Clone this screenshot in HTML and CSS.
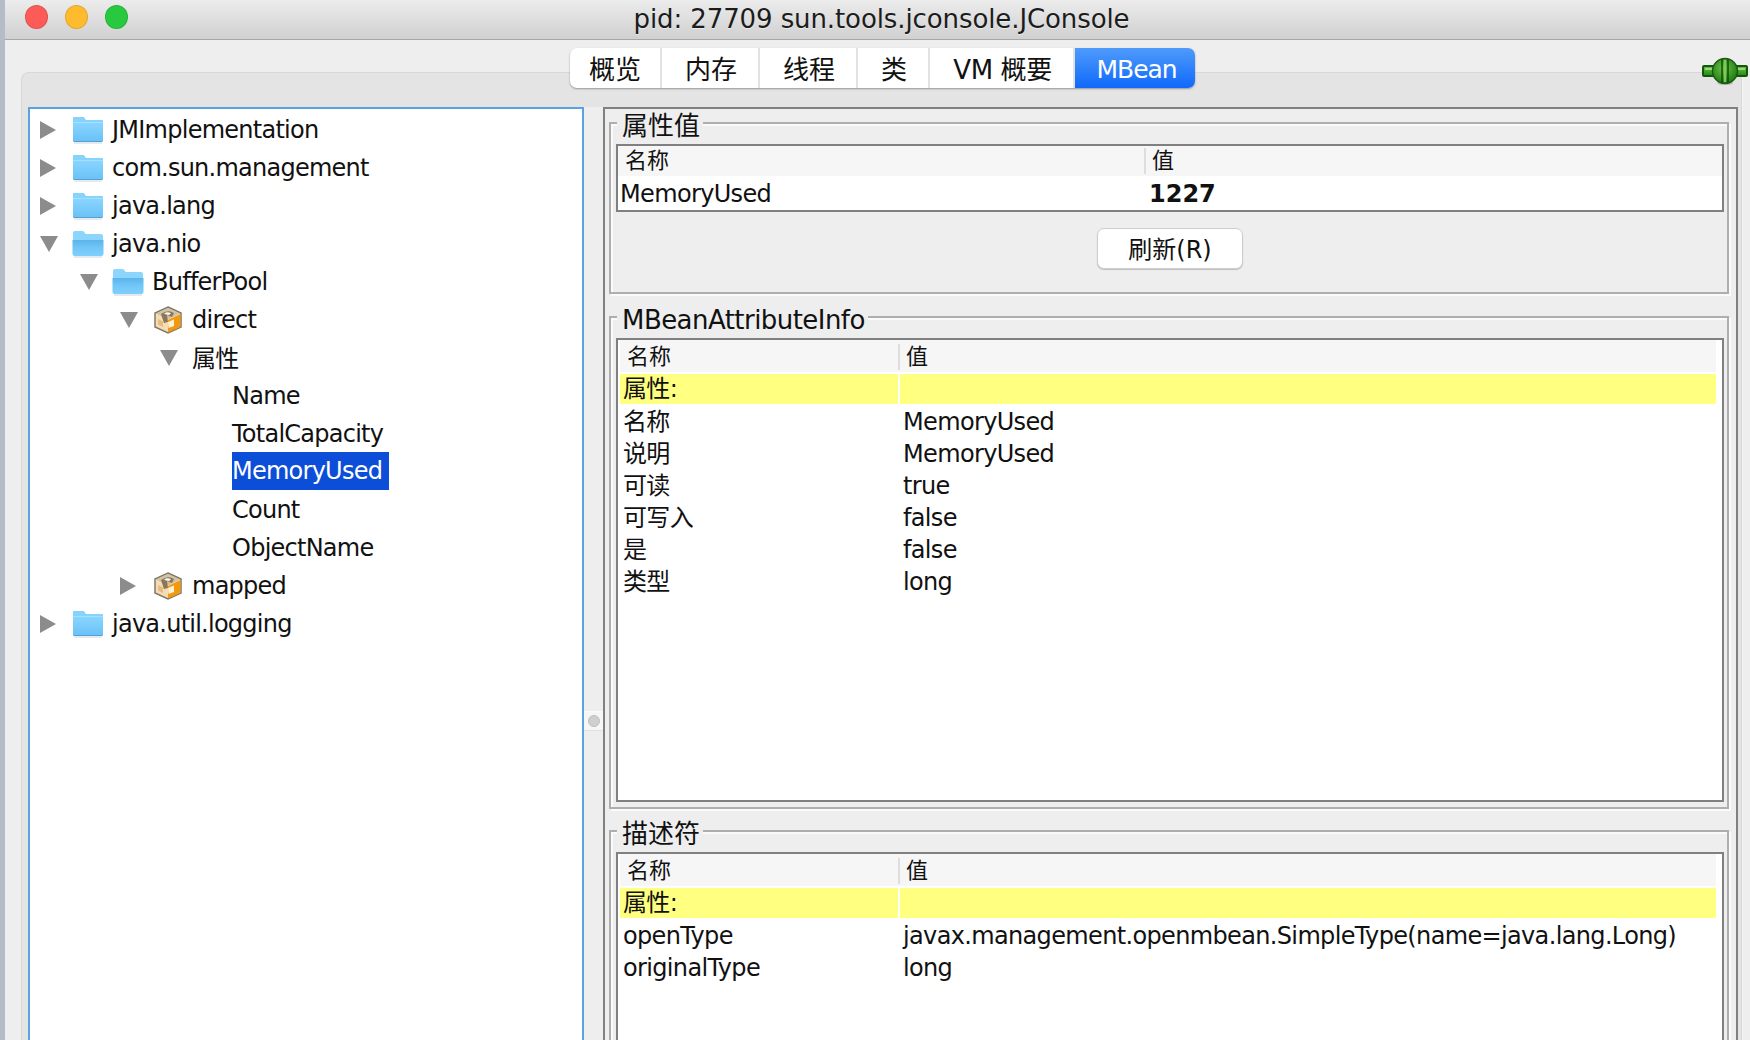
FILE: index.html
```html
<!DOCTYPE html>
<html lang="zh">
<head>
<meta charset="utf-8">
<title>pid: 27709 sun.tools.jconsole.JConsole</title>
<link rel="stylesheet" href="styles.css">
</head>
<body>
<svg class="defs" width="0" height="0" aria-hidden="true">
  <defs>
    <linearGradient id="fg" x1="0" y1="0" x2="0" y2="1">
      <stop offset="0" stop-color="#8ad6ff"/><stop offset="1" stop-color="#6ac2f8"/>
    </linearGradient>
    <linearGradient id="fo" x1="0" y1="0" x2="0" y2="1">
      <stop offset="0" stop-color="#5cb4ea"/><stop offset=".5" stop-color="#72c6f8"/><stop offset="1" stop-color="#7fd0fc"/>
    </linearGradient>
    <linearGradient id="gb" x1="0" y1="0" x2="0" y2="1">
      <stop offset="0" stop-color="#6cc04a"/><stop offset="1" stop-color="#1f8a10"/>
    </linearGradient>
    <radialGradient id="gc" cx=".45" cy=".4" r=".6">
      <stop offset="0" stop-color="#6fc446"/><stop offset="1" stop-color="#1c7d12"/>
    </radialGradient>
    <symbol id="folder" viewBox="0 0 32 28">
      <path d="M1 3Q1 1 3 1H10Q12 1 13 3L13.500 4H29Q31 4 31 6V24.500Q31 26 29.500 26H2.500Q1 26 1 24.500Z" fill="#5a9fd0"/>
      <path d="M1 3Q1 1 3 1H10Q12 1 13 3L13.500 4H29Q31 4 31 6V7H1Z" fill="#86d4fd"/>
      <path d="M1 6H31V24Q31 25 29.500 25H2.500Q1 25 1 24Z" fill="url(#fg)"/>
      <path d="M1 6.500H31" stroke="#a4e0ff" stroke-width="1"/>
      <path d="M2 27H30" stroke="#c9d6de" stroke-width="1"/>
    </symbol>
    <symbol id="folder-open" viewBox="0 0 32 28">
      <path d="M1 3Q1 1 3 1H10Q12 1 13 3L13.500 4H29Q31 4 31 6V10H1Z" fill="#8cd6fd"/>
      <path d="M0.500 10H31.500V24Q31.500 26 29.500 26H2.500Q0.500 26 0.500 24Z" fill="url(#fo)"/>
      <path d="M2 27H30" stroke="#c9d6de" stroke-width="1"/>
    </symbol>
    <symbol id="pkg" viewBox="0 0 30 28">
      <path d="M15 1L28 7V21L15 27L2 21V7Z" fill="#f5dcb2" stroke="#7f7869" stroke-width="1.500"/>
      <path d="M15 14L27.500 8V21L15 26.500Z" fill="#f29a0f"/>
      <path d="M15 2L27 7.500L15 13.500L3 7.500Z" fill="#cfc2a8"/>
      <path d="M8 8Q15 3 21 7L19 11L14 9L15 16L11 17Z" fill="#8a7658"/>
      <path d="M11 7.500Q15 5 18 7.500L16 9L13 8.500Z" fill="#fff6e4"/>
      <path d="M15 16L21 13.500V20L15.500 22Z" fill="#fff1d6"/>
      <path d="M5 13L10 15.500V21L5 18.500Z" fill="#e3bd80"/>
    </symbol>
    <symbol id="tri-r" viewBox="0 0 16 18"><path d="M0 0L16 9L0 18Z" fill="#8c8c8c"/></symbol>
    <symbol id="tri-d" viewBox="0 0 18 16"><path d="M0 0H18L9 16Z" fill="#8c8c8c"/></symbol>
  </defs>
</svg>

<div class="window">
  <header class="titlebar">
    <div class="lights">
      <span class="light red"></span><span class="light amber"></span><span class="light green"></span>
    </div>
    <div class="title">pid: 27709 sun.tools.jconsole.JConsole</div>
  </header>

  <main class="client">
    <nav class="tabs">
      <span class="tab t1">概览</span><span class="tab t2">内存</span><span class="tab t3">线程</span><span class="tab t4">类</span><span class="tab t5">VM 概要</span><span class="tab t6 active">MBean</span>
    </nav>
    <svg class="plug" width="46" height="28" viewBox="0 0 46 28" aria-hidden="true">
      <ellipse cx="23" cy="26" rx="8" ry="2" fill="#bbb"/>
      <rect x="1" y="9" width="44" height="10" rx="1" fill="url(#gb)" stroke="#16560c" stroke-width="2"/>
      <path d="M3 12H43" stroke="#9ad67a" stroke-width="2"/>
      <circle cx="23" cy="14" r="12.500" fill="url(#gc)" stroke="#1d5a12" stroke-width="1.500"/>
      <path d="M20 2V26M26 2V26" stroke="#124a0b" stroke-width="1.500"/>
      <path d="M23 3V25" stroke="#7ccb58" stroke-width="2"/>
    </svg>

    <div class="pane">
      <div class="split">
        <section class="tree">
          <div class="node d0"><svg class="tog r"><use href="#tri-r"/></svg><svg class="ico"><use href="#folder"/></svg><span class="lbl">JMImplementation</span></div>
          <div class="node d0"><svg class="tog r"><use href="#tri-r"/></svg><svg class="ico"><use href="#folder"/></svg><span class="lbl">com.sun.management</span></div>
          <div class="node d0"><svg class="tog r"><use href="#tri-r"/></svg><svg class="ico"><use href="#folder"/></svg><span class="lbl">java.lang</span></div>
          <div class="node d0"><svg class="tog"><use href="#tri-d"/></svg><svg class="ico"><use href="#folder-open"/></svg><span class="lbl">java.nio</span></div>
          <div class="node d1"><svg class="tog"><use href="#tri-d"/></svg><svg class="ico"><use href="#folder-open"/></svg><span class="lbl">BufferPool</span></div>
          <div class="node d2"><svg class="tog"><use href="#tri-d"/></svg><svg class="ico"><use href="#pkg"/></svg><span class="lbl">direct</span></div>
          <div class="node d3"><svg class="tog"><use href="#tri-d"/></svg><span class="lbl flat">属性</span></div>
          <div class="node d4"><span class="lbl leaf">Name</span></div>
          <div class="node d4"><span class="lbl leaf">TotalCapacity</span></div>
          <div class="node d4"><span class="lbl leaf selected">MemoryUsed</span></div>
          <div class="node d4"><span class="lbl leaf">Count</span></div>
          <div class="node d4"><span class="lbl leaf">ObjectName</span></div>
          <div class="node d2"><svg class="tog r"><use href="#tri-r"/></svg><svg class="ico"><use href="#pkg"/></svg><span class="lbl">mapped</span></div>
          <div class="node d0"><svg class="tog r"><use href="#tri-r"/></svg><svg class="ico"><use href="#folder"/></svg><span class="lbl">java.util.logging</span></div>
        </section>

        <div class="divider"><span class="grip"><span class="dot"></span></span></div>

        <section class="detail">
          <div class="group g1">
            <div class="legend">属性值</div>
            <div class="table tv">
              <div class="head cols-a"><span class="hc">名称</span><span class="hc sep">值</span></div>
              <div class="valrow cols-a"><span>MemoryUsed</span><span class="bold">1227</span></div>
            </div>
            <div class="actions"><button class="btn" type="button">刷新(R)</button></div>
          </div>

          <div class="group g2">
            <div class="legend">MBeanAttributeInfo</div>
            <div class="table ti">
              <div class="head cols-b"><span class="hc">名称</span><span class="hc sep">值</span></div>
              <div class="hl cols-b"><span>属性:</span><span></span></div>
              <div class="row cols-b"><span>名称</span><span>MemoryUsed</span></div>
              <div class="row cols-b"><span>说明</span><span>MemoryUsed</span></div>
              <div class="row cols-b"><span>可读</span><span>true</span></div>
              <div class="row cols-b"><span>可写入</span><span>false</span></div>
              <div class="row cols-b"><span>是</span><span>false</span></div>
              <div class="row cols-b"><span>类型</span><span>long</span></div>
            </div>
          </div>

          <div class="group g3">
            <div class="legend">描述符</div>
            <div class="table ti">
              <div class="head cols-b"><span class="hc">名称</span><span class="hc sep">值</span></div>
              <div class="hl cols-b"><span>属性:</span><span></span></div>
              <div class="row cols-b"><span>openType</span><span>javax.management.openmbean.SimpleType(name=java.lang.Long)</span></div>
              <div class="row cols-b"><span>originalType</span><span>long</span></div>
            </div>
          </div>
        </section>
      </div>
    </div>
  </main>
</div>
</body>
</html>
```

FILE: styles.css
```css
* { box-sizing: border-box; }
html, body { margin: 0; height: 100%; overflow: hidden; }
body {
  background: #b4bcc8;
  font-family: "DejaVu Sans", "Noto Sans CJK SC", sans-serif;
  font-size: 24px;
  color: #111;
}
.defs { position: absolute; }

.window { margin-left: 5px; height: 1040px; overflow: hidden; background: #eeeeee; display: flex; flex-direction: column; }

.titlebar {
  height: 40px; flex: none; position: relative;
  display: flex; align-items: center; justify-content: center;
  background: linear-gradient(#ececec, #d0d0d0);
  border-bottom: 1px solid #a6a6a6;
}
.lights { position: absolute; left: 20px; top: 5px; display: flex; gap: 17px; }
.light { width: 23px; height: 24px; border-radius: 50%; border: 1px solid rgba(0,0,0,.1); }
.red { background: #fc5b57; }
.amber { background: #febb2e; }
.green { background: #28c93f; }
.title { font-size: 26px; color: #1c1c1c; margin-left: 8px; padding-bottom: 1px; letter-spacing: -.1px; text-shadow: 0 1px 0 rgba(255,255,255,.5); }

.client { flex: 1; position: relative; padding: 32px 8px 0 16px; min-height: 0; }
.pane {
  height: 1080px;
  background: #e4e4e4;
  border: 1px solid #d8d8d8; border-bottom: 0;
  border-radius: 8px 8px 0 0;
  padding: 34px 3px 0 6px;
  box-shadow: 1px 0 0 #f4f4f4;
}
.split { display: flex; height: 100%; background: #eeeeee; }

.tabs {
  position: absolute; left: 565px; top: 8px; z-index: 2;
  display: flex; height: 40px;
  background: #fff; border-radius: 7px;
  box-shadow: 0 1px 2px rgba(0,0,0,.35);
  font-size: 26px;
}
.tab { display: flex; align-items: center; justify-content: center; border-right: 2px solid #e2e2e2; padding-bottom: 2px; padding-left: 2px; }
.t1 { width: 92px; padding-left: 0; }
.t2, .t3 { width: 98px; }
.t4 { width: 72px; }
.t5 { width: 145px; letter-spacing: -.4px; }
.t6 { width: 120px; border-right: 0; padding: 3px 0 0 3px; font-size: 25px; letter-spacing: -1.1px; border-radius: 0 7px 7px 0; color: #fff; background: linear-gradient(#4f9bfb, #0f69fa); }

.plug { position: absolute; right: 2px; top: 17px; z-index: 2; }

/* tree */
.tree { width: 556px; flex: none; background: #fff; border: 2px solid #5ba2e3; border-bottom: 0; padding-top: 2px; letter-spacing: -.75px; }
.node { height: 38px; display: flex; align-items: center; white-space: nowrap; }
.d0 { padding-left: 10px; }
.d1 { padding-left: 50px; }
.d2 { padding-left: 90px; }
.d3 { padding-left: 130px; }
.d4 { padding-left: 202px; }
.tog { width: 18px; height: 16px; margin-right: 14px; flex: none; }
.tog.r { width: 16px; height: 18px; margin-right: 16px; }
.ico { width: 32px; height: 28px; flex: none; }
.lbl { margin-left: 8px; }
.lbl.flat, .lbl.leaf { margin-left: 0; }
.lbl.flat { padding-bottom: 4px; }
.selected { background: #0c4ed8; color: #fff; height: 38px; line-height: 38px; padding-right: 7px; margin-bottom: 2px; }

/* divider */
.divider { width: 19px; flex: none; padding-top: 604px; }
.grip { display: flex; align-items: center; justify-content: center; height: 20px; background: #f6f6f6; border-top: 1px solid #fafafa; border-bottom: 1px solid #e2e2e2; }
.dot { width: 12px; height: 12px; border-radius: 50%; background: #cfcfcf; border: 1px solid #c0c0c0; }

/* right side */
.detail {
  flex: 1; min-width: 0;
  border: 2px solid #808080; border-bottom: 0;
  padding: 13px 7px 0 4px;
  display: flex; flex-direction: column; gap: 22px;
}
.group {
  border: 2px solid #aeaeae;
  box-shadow: 2px 2px 0 #fafafa, inset 2px 2px 0 #fafafa;
  padding: 0 3px 0 5px;
  flex: none;
}
.g1 { height: 172px; }
.g2 { height: 493px; }
.g3 { height: 400px; margin-top: -1px; }
.legend {
  width: fit-content; height: 28px; margin: -12px 0 -4px 1px; padding: 0 3px 0 5px;
  line-height: 28px; font-size: 26px; background: #eeeeee; position: relative;
}
.g2 .legend { letter-spacing: -.55px; }
.g2 .legend, .g3 .legend { margin-bottom: 4px; }

.table { background: #fff; border: 2px solid #808080; padding: 0 2px; letter-spacing: -.65px; }
.tv { height: 68px; margin-top: 8px; }
.ti { height: 464px; padding-right: 6px; }
.g3 .ti { height: 300px; }

.cols-a { display: grid; grid-template-columns: 524px 1fr; }
.cols-b { display: grid; grid-template-columns: 278px 1fr; }

.head { background: #f6f6f6; font-size: 22px; align-items: center; letter-spacing: 0; }
.tv .head { height: 30px; margin: 0 -2px; padding: 0 2px; }
.ti .head { height: 32px; margin-bottom: 2px; padding-top: 1px; }
.hc { padding-left: 7px; line-height: 26px; }
.tv .hc { padding-left: 5px; }
.hc.sep, .tv .hc.sep { border-left: 2px solid #dedede; padding-left: 6px; }

.valrow { height: 34px; line-height: 36px; }
.bold { font-weight: 700; padding-left: 5px; letter-spacing: 0; }

.hl { height: 29px; line-height: 30px; }
.hl > span { background: #ffff80; padding-left: 3px; }
.hl > span + span { margin-left: 2px; }

.row { height: 32px; line-height: 32px; white-space: nowrap; }
.hl + .row { margin-top: 3px; }
.row > span:first-child { padding-left: 3px; }
.row > span + span { padding-left: 5px; }

.actions { display: flex; justify-content: center; padding-top: 16px; }
.btn {
  width: 146px; height: 41px; padding: 0 0 2px;
  font: inherit; color: #111;
  background: #fff; border: 1px solid #cdcdcd; border-radius: 7px;
  box-shadow: 0 1px 1px rgba(0,0,0,.2);
}
```
